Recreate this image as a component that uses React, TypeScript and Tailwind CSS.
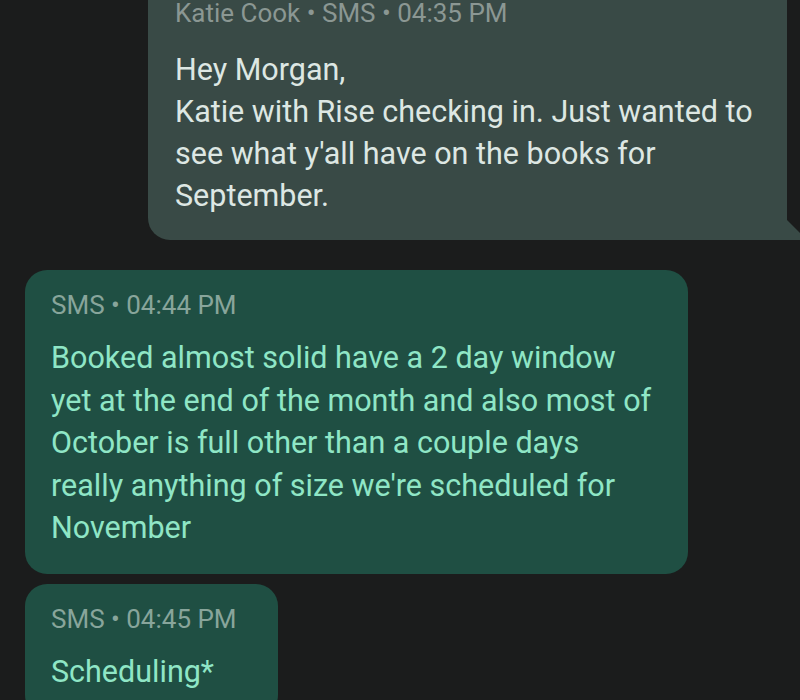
const font = { fontFamily: "Roboto, 'Noto Sans', sans-serif" };

type Msg = {
  meta: string;
  lines: string[];
  incoming?: boolean;
};

const messages: Msg[] = [
  {
    meta: "Katie Cook • SMS • 04:35 PM",
    lines: [
      "Hey Morgan,",
      "Katie with Rise checking in. Just wanted to",
      "see what y'all have on the books for",
      "September.",
    ],
    incoming: true,
  },
  {
    meta: "SMS • 04:44 PM",
    lines: [
      "Booked almost solid have a 2 day window",
      "yet at the end of the month and also most of",
      "October is full other than a couple days",
      "really anything of size we're scheduled for",
      "November",
    ],
  },
  { meta: "SMS • 04:45 PM", lines: ["Scheduling*"] },
];

function Bubble({ msg, width }: { msg: Msg; width: string }) {
  if (msg.incoming) {
    return (
      <div className={`relative ${width} self-end mr-[13px] rounded-[22px] rounded-br-none bg-[#394a46] pl-[27px] pr-[24px] pt-[20px] pb-[23px]`}>
        <div className="whitespace-nowrap text-[26px] leading-[30px] text-[#8b9793]">{msg.meta}</div>
        <div className="mt-[21px] whitespace-nowrap text-[30.5px] leading-[42px] text-[#dde7e3]">
          {msg.lines.map((l) => (
            <div key={l}>{l}</div>
          ))}
        </div>
        <svg className="absolute bottom-0 right-[-13px]" width="13" height="20" viewBox="0 0 13 20">
          <path d="M0 0 L13 13 L13 20 L0 20 Z" fill="#394a46" />
        </svg>
      </div>
    );
  }
  return (
    <div className={`${width} rounded-[22px] bg-[#1f4f43] pl-[26px] pr-[24px] pt-[20px] pb-[24px]`}>
      <div className="whitespace-nowrap text-[26px] leading-[30px] text-[#88a59b]">{msg.meta}</div>
      <div className="mt-[17px] whitespace-nowrap text-[30.5px] leading-[42.5px] text-[#8fe6c6]">
        {msg.lines.map((l) => (
          <div key={l}>{l}</div>
        ))}
      </div>
    </div>
  );
}

export default function App() {
  return (
    <div className="h-[700px] w-[800px] overflow-hidden bg-[#1b1c1c]" style={font}>
      <div className="mt-[-22px] flex flex-col pl-[25px]">
        <Bubble msg={messages[0]} width="w-[639px]" />
        <div className="mt-[30px]">
          <Bubble msg={messages[1]} width="w-[663px]" />
        </div>
        <div className="mt-[10px]">
          <Bubble msg={messages[2]} width="w-[253px]" />
        </div>
      </div>
    </div>
  );
}
